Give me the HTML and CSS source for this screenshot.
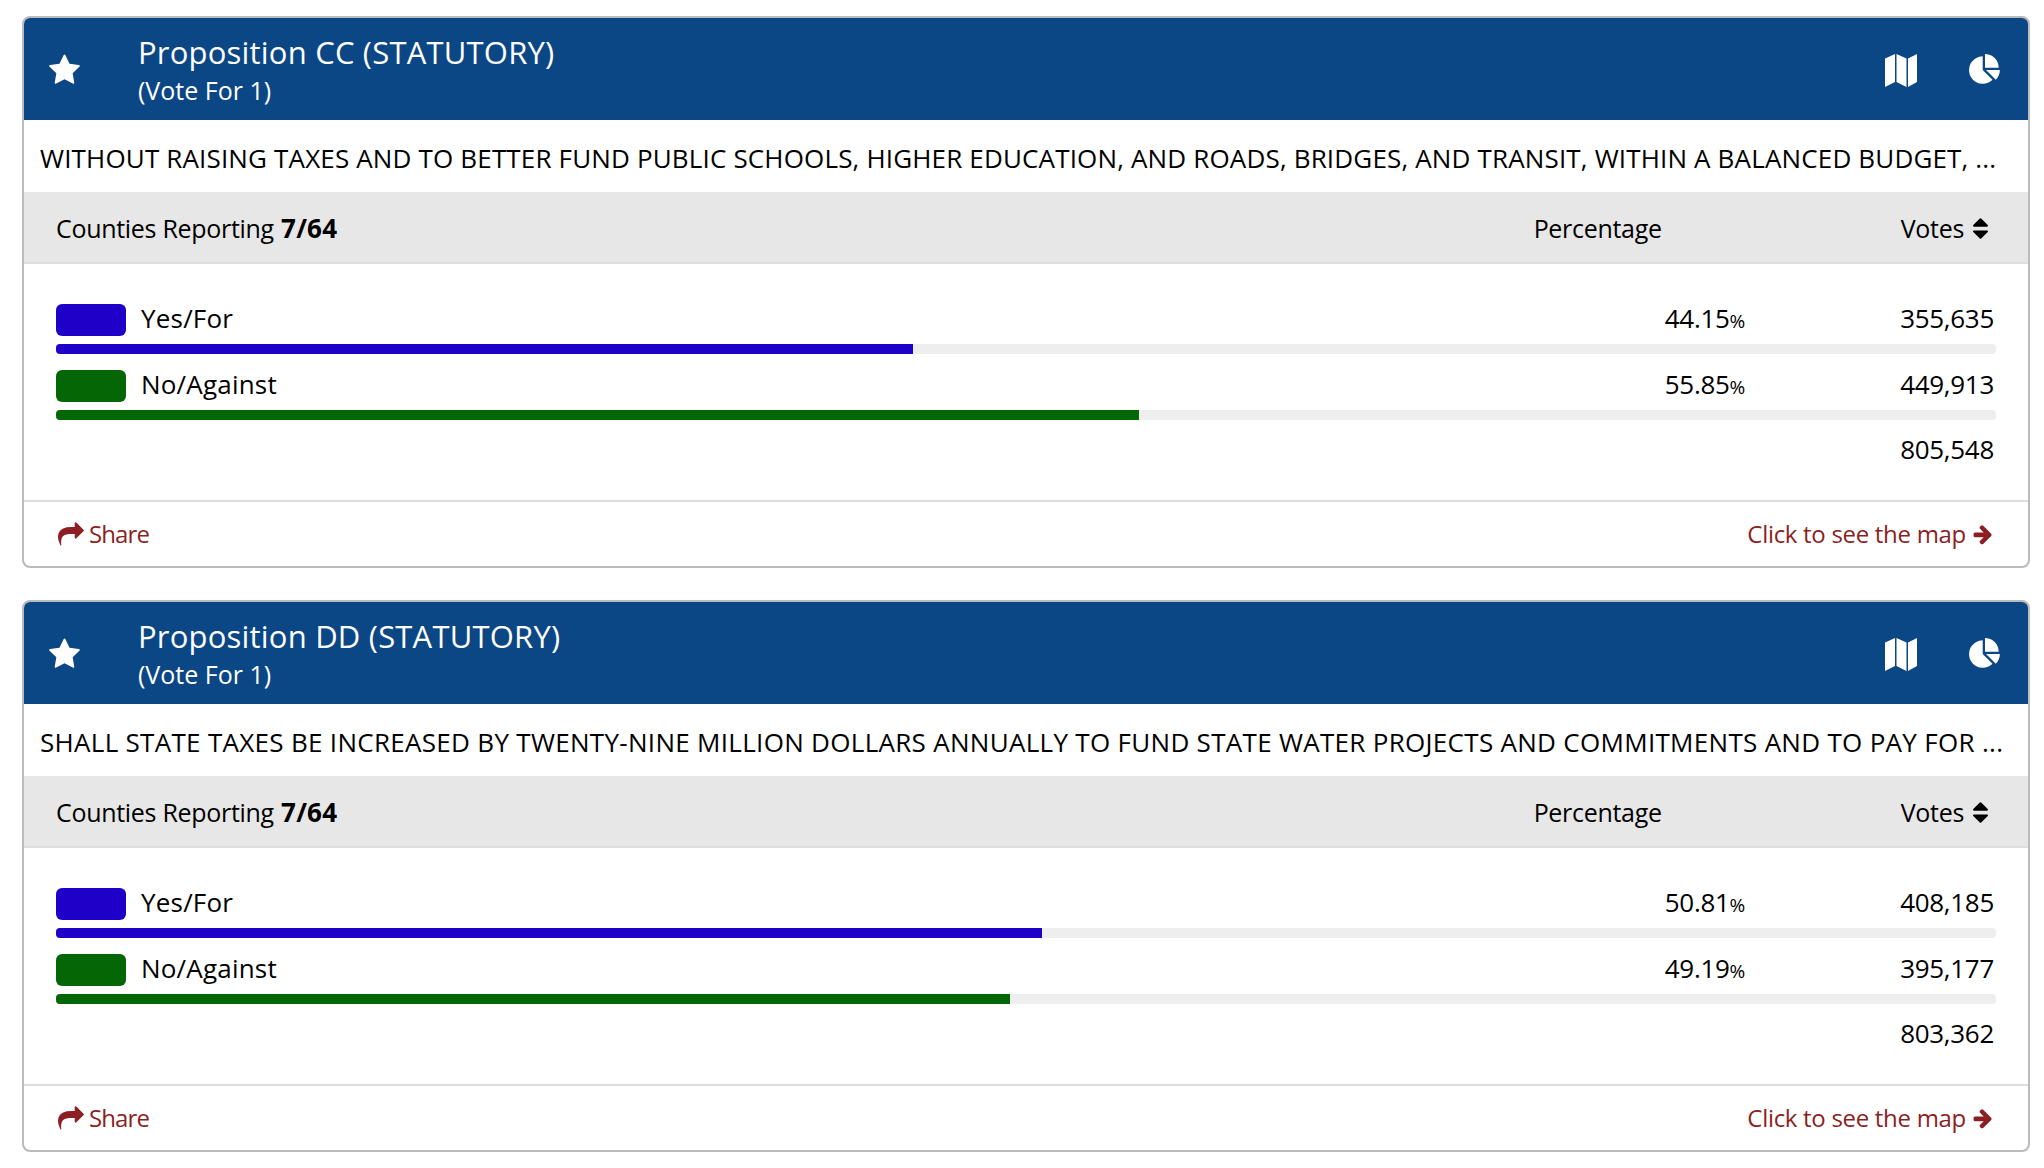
FILE: index.html
```html
<!doctype html>
<html lang="en">
<head>
    <meta charset="utf-8">
    <title>Election Results</title>
    <link rel="stylesheet" href="styles.css">
</head>
<body>

<svg class="icon-defs" aria-hidden="true">
    <symbol id="i-star" viewBox="0 0 1792 1792"><path d="M1728 647q0 22-26 48l-363 354 86 500q1 7 1 20 0 21-10.500 35.500t-30.500 14.500q-19 0-40-12l-449-236-449 236q-22 12-40 12-21 0-31.500-14.500t-10.500-35.500q0-6 2-20l86-500-364-354q-25-27-25-48 0-37 56-46l502-73 225-455q19-41 49-41t49 41l225 455 502 73q56 9 56 46z"/></symbol>
    <symbol id="i-map" viewBox="0 0 32 33"><path d="M0 4.500 10 0v28L0 33zM11.500 0l10 4.500V33l-10-5zM23 4.500 32 0v28l-9 5z"/></symbol>
    <symbol id="i-pie" viewBox="0 0 1792 1792"><path d="M768 890l546 546q-106 108-247.500 168t-298.500 60q-209 0-385.500-103t-279.500-279.500-103-385.500 103-385.500 279.500-279.500 385.500-103v762zm187 6h773q0 157-60 298.500t-168 247.500zm709-128h-768v-768q209 0 385.500 103t279.500 279.500 103 385.500z"/></symbol>
    <symbol id="i-sort" viewBox="384 192 1024 1408"><path d="M1408 1088q0 26-19 45l-448 448q-19 19-45 19t-45-19l-448-448q-19-19-19-45t19-45 45-19h896q26 0 45 19t19 45zm0-384q0 26-19 45t-45 19h-896q-26 0-45-19t-19-45 19-45l448-448q19-19 45-19t45 19l448 448q19 19 19 45z"/></symbol>
    <symbol id="i-share" viewBox="0 0 1792 1792"><path d="M1792 640q0 26-19 45l-512 512q-19 19-45 19t-45-19-19-45v-256h-224q-98 0-175.500 6t-154 21.500-133 42.500-105.500 69.500-79 104-48 144.500-18 191.500q0 56 5 125.500 0 6 2.500 23.500t2.500 26.500q0 15-8.500 25t-23.500 10q-16 0-28-17-7-9-13-22t-13.500-30-10.500-24q-127-285-127-451 0-199 53-333 162-403 875-403h224v-256q0-26 19-45t45-19 45 19l512 512q19 19 19 45z"/></symbol>
    <symbol id="i-arrow" viewBox="0 0 1792 1792"><path d="M1600 960q0 54-37 91l-651 651q-39 37-91 37-51 0-90-37l-75-75q-38-38-38-91t38-91l293-293h-704q-52 0-84.500-37.500t-32.500-90.500v-128q0-53 32.500-90.500t84.500-37.500h704l-293-294q-38-36-38-90t38-90l75-75q38-38 90-38 53 0 91 38l651 651q37 35 37 90z"/></symbol>
</svg>

<!-- Proposition CC -->
<section class="race">
    <header class="race-head">
        <svg class="head-star"><use href="#i-star"/></svg>
        <div class="race-title">
            <h2>Proposition CC (STATUTORY)</h2>
            <p>(Vote For 1)</p>
        </div>
        <svg class="head-map"><use href="#i-map"/></svg>
        <svg class="head-pie"><use href="#i-pie"/></svg>
    </header>
    <p class="race-desc">WITHOUT RAISING TAXES AND TO BETTER FUND PUBLIC SCHOOLS, HIGHER EDUCATION, AND ROADS, BRIDGES, AND TRANSIT, WITHIN A BALANCED BUDGET, ...</p>
    <div class="race-cols">
        <span class="col-name">Counties Reporting <b>7/64</b></span>
        <span class="col-pct">Percentage</span>
        <span class="col-votes">Votes <svg class="sort"><use href="#i-sort"/></svg></span>
    </div>
    <div class="choices">
        <div class="choice">
            <div class="choice-line">
                <span class="swatch blue"></span>
                <span class="choice-name">Yes/For</span>
                <span class="choice-pct">44.15<small>%</small></span>
                <span class="choice-votes">355,635</span>
            </div>
            <div class="bar"><div class="bar-fill blue" style="width:44.15%"></div></div>
        </div>
        <div class="choice">
            <div class="choice-line">
                <span class="swatch green"></span>
                <span class="choice-name">No/Against</span>
                <span class="choice-pct">55.85<small>%</small></span>
                <span class="choice-votes">449,913</span>
            </div>
            <div class="bar"><div class="bar-fill green" style="width:55.85%"></div></div>
        </div>
        <div class="total">805,548</div>
    </div>
    <footer class="race-foot">
        <a class="foot-left" href="#"><svg class="foot-share"><use href="#i-share"/></svg> Share</a>
        <a href="#">Click to see the map <svg class="foot-arrow"><use href="#i-arrow"/></svg></a>
    </footer>
</section>

<!-- Proposition DD -->
<section class="race">
    <header class="race-head">
        <svg class="head-star"><use href="#i-star"/></svg>
        <div class="race-title">
            <h2>Proposition DD (STATUTORY)</h2>
            <p>(Vote For 1)</p>
        </div>
        <svg class="head-map"><use href="#i-map"/></svg>
        <svg class="head-pie"><use href="#i-pie"/></svg>
    </header>
    <p class="race-desc race-desc-wide">SHALL STATE TAXES BE INCREASED BY TWENTY-NINE MILLION DOLLARS ANNUALLY TO FUND STATE WATER PROJECTS AND COMMITMENTS AND TO PAY FOR ...</p>
    <div class="race-cols">
        <span class="col-name">Counties Reporting <b>7/64</b></span>
        <span class="col-pct">Percentage</span>
        <span class="col-votes">Votes <svg class="sort"><use href="#i-sort"/></svg></span>
    </div>
    <div class="choices">
        <div class="choice">
            <div class="choice-line">
                <span class="swatch blue"></span>
                <span class="choice-name">Yes/For</span>
                <span class="choice-pct">50.81<small>%</small></span>
                <span class="choice-votes">408,185</span>
            </div>
            <div class="bar"><div class="bar-fill blue" style="width:50.81%"></div></div>
        </div>
        <div class="choice">
            <div class="choice-line">
                <span class="swatch green"></span>
                <span class="choice-name">No/Against</span>
                <span class="choice-pct">49.19<small>%</small></span>
                <span class="choice-votes">395,177</span>
            </div>
            <div class="bar"><div class="bar-fill green" style="width:49.19%"></div></div>
        </div>
        <div class="total">803,362</div>
    </div>
    <footer class="race-foot">
        <a class="foot-left" href="#"><svg class="foot-share"><use href="#i-share"/></svg> Share</a>
        <a href="#">Click to see the map <svg class="foot-arrow"><use href="#i-arrow"/></svg></a>
    </footer>
</section>

</body>
</html>
```

FILE: styles.css
```css
/* Page */
body {
    margin: 0;
    padding: 16px 14px 0 22px;
    background: #fff;
    color: #000;
    font-family: "Open Sans", "Noto Sans", sans-serif;
    font-size: 25px;
}

.icon-defs {
    display: none;
}

svg {
    fill: currentColor;
}

/* Card */
.race {
    width: 2008px;
    height: 552px;
    margin-bottom: 32px;
    border: 2px solid #bbb;
    border-radius: 8px;
    box-sizing: border-box;
    overflow: hidden;
}

/* Blue header */
.race-head {
    display: flex;
    align-items: center;
    height: 102px;
    background: #0b4685;
    color: #fff;
}

.head-star {
    width: 33px;
    height: 33px;
    margin: 2px 0 0 24px;
}

.race-title {
    flex: 1;
    margin-left: 57px;
}

.race-title h2 {
    margin: 0;
    font-size: 31px;
    font-weight: 400;
    letter-spacing: 0.2px;
    line-height: 42px;
}

.race-title p {
    margin: 0;
    line-height: 34px;
}

.head-map {
    width: 32px;
    height: 33px;
    margin-top: 2px;
}

.head-pie {
    width: 32px;
    height: 32px;
    margin: 2px 27px 0 52px;
}

/* Description */
.race-desc {
    display: flex;
    align-items: center;
    height: 72px;
    margin: 0;
    padding: 3px 0 0 16px;
    box-sizing: border-box;
    font-size: 26px;
    letter-spacing: 0.16px;
    white-space: nowrap;
}

.race-desc-wide {
    letter-spacing: 0.3px;
}

/* Column heads */
.race-cols {
    display: flex;
    align-items: center;
    height: 72px;
    padding: 2px 40px 0 32px;
    background: #e7e7e7;
    border-bottom: 2px solid #ddd;
    box-sizing: border-box;
    letter-spacing: -0.3px;
}

.col-name {
    flex: 1;
}

.col-name b {
    margin-left: 1px;
    font-size: 26px;
    letter-spacing: 0.2px;
}

.col-pct {
    margin-right: 239px;
}

.col-votes {
    display: flex;
    align-items: center;
    gap: 9px;
}

.sort {
    width: 15px;
    height: 21px;
}

/* Result rows */
.choices {
    height: 238px;
    padding: 40px 32px 0;
    box-sizing: border-box;
    border-bottom: 2px solid #ddd;
    font-size: 26px;
}

.choice {
    margin-bottom: 16px;
}

.choice-line {
    display: flex;
    align-items: center;
    height: 32px;
}

.swatch {
    width: 70px;
    height: 32px;
    border-radius: 6px;
}

.blue {
    background: #1f00c8;
}

.green {
    background: #056605;
}

.choice-name {
    flex: 1;
    margin-left: 15px;
    padding-bottom: 4px;
    letter-spacing: 0.2px;
}

.choice-pct {
    padding-bottom: 4px;
    letter-spacing: -0.3px;
}

.choice-pct small {
    font-size: 19px;
}

.choice-votes {
    width: 249px;
    margin-right: 2px;
    padding-bottom: 4px;
    letter-spacing: -0.3px;
    text-align: right;
}

.bar {
    height: 10px;
    margin-top: 8px;
    border-radius: 4px;
    background: #eee;
    overflow: hidden;
}

.bar-fill {
    height: 100%;
}

.total {
    margin-top: -5px;
    padding-right: 2px;
    letter-spacing: -0.3px;
    text-align: right;
}

/* Footer links */
.race-foot {
    display: flex;
    align-items: center;
    justify-content: space-between;
    height: 62px;
    padding: 1px 34px 0;
    box-sizing: border-box;
    font-size: 24px;
    letter-spacing: -0.3px;
}

.race-foot a {
    display: flex;
    align-items: center;
    gap: 6px;
    color: #8b1f24;
    text-decoration: none;
}

.race-foot .foot-left {
    gap: 5px;
    letter-spacing: -0.9px;
}

.foot-share {
    width: 26px;
    height: 26px;
}

.foot-arrow {
    width: 22px;
    height: 22px;
}
```
